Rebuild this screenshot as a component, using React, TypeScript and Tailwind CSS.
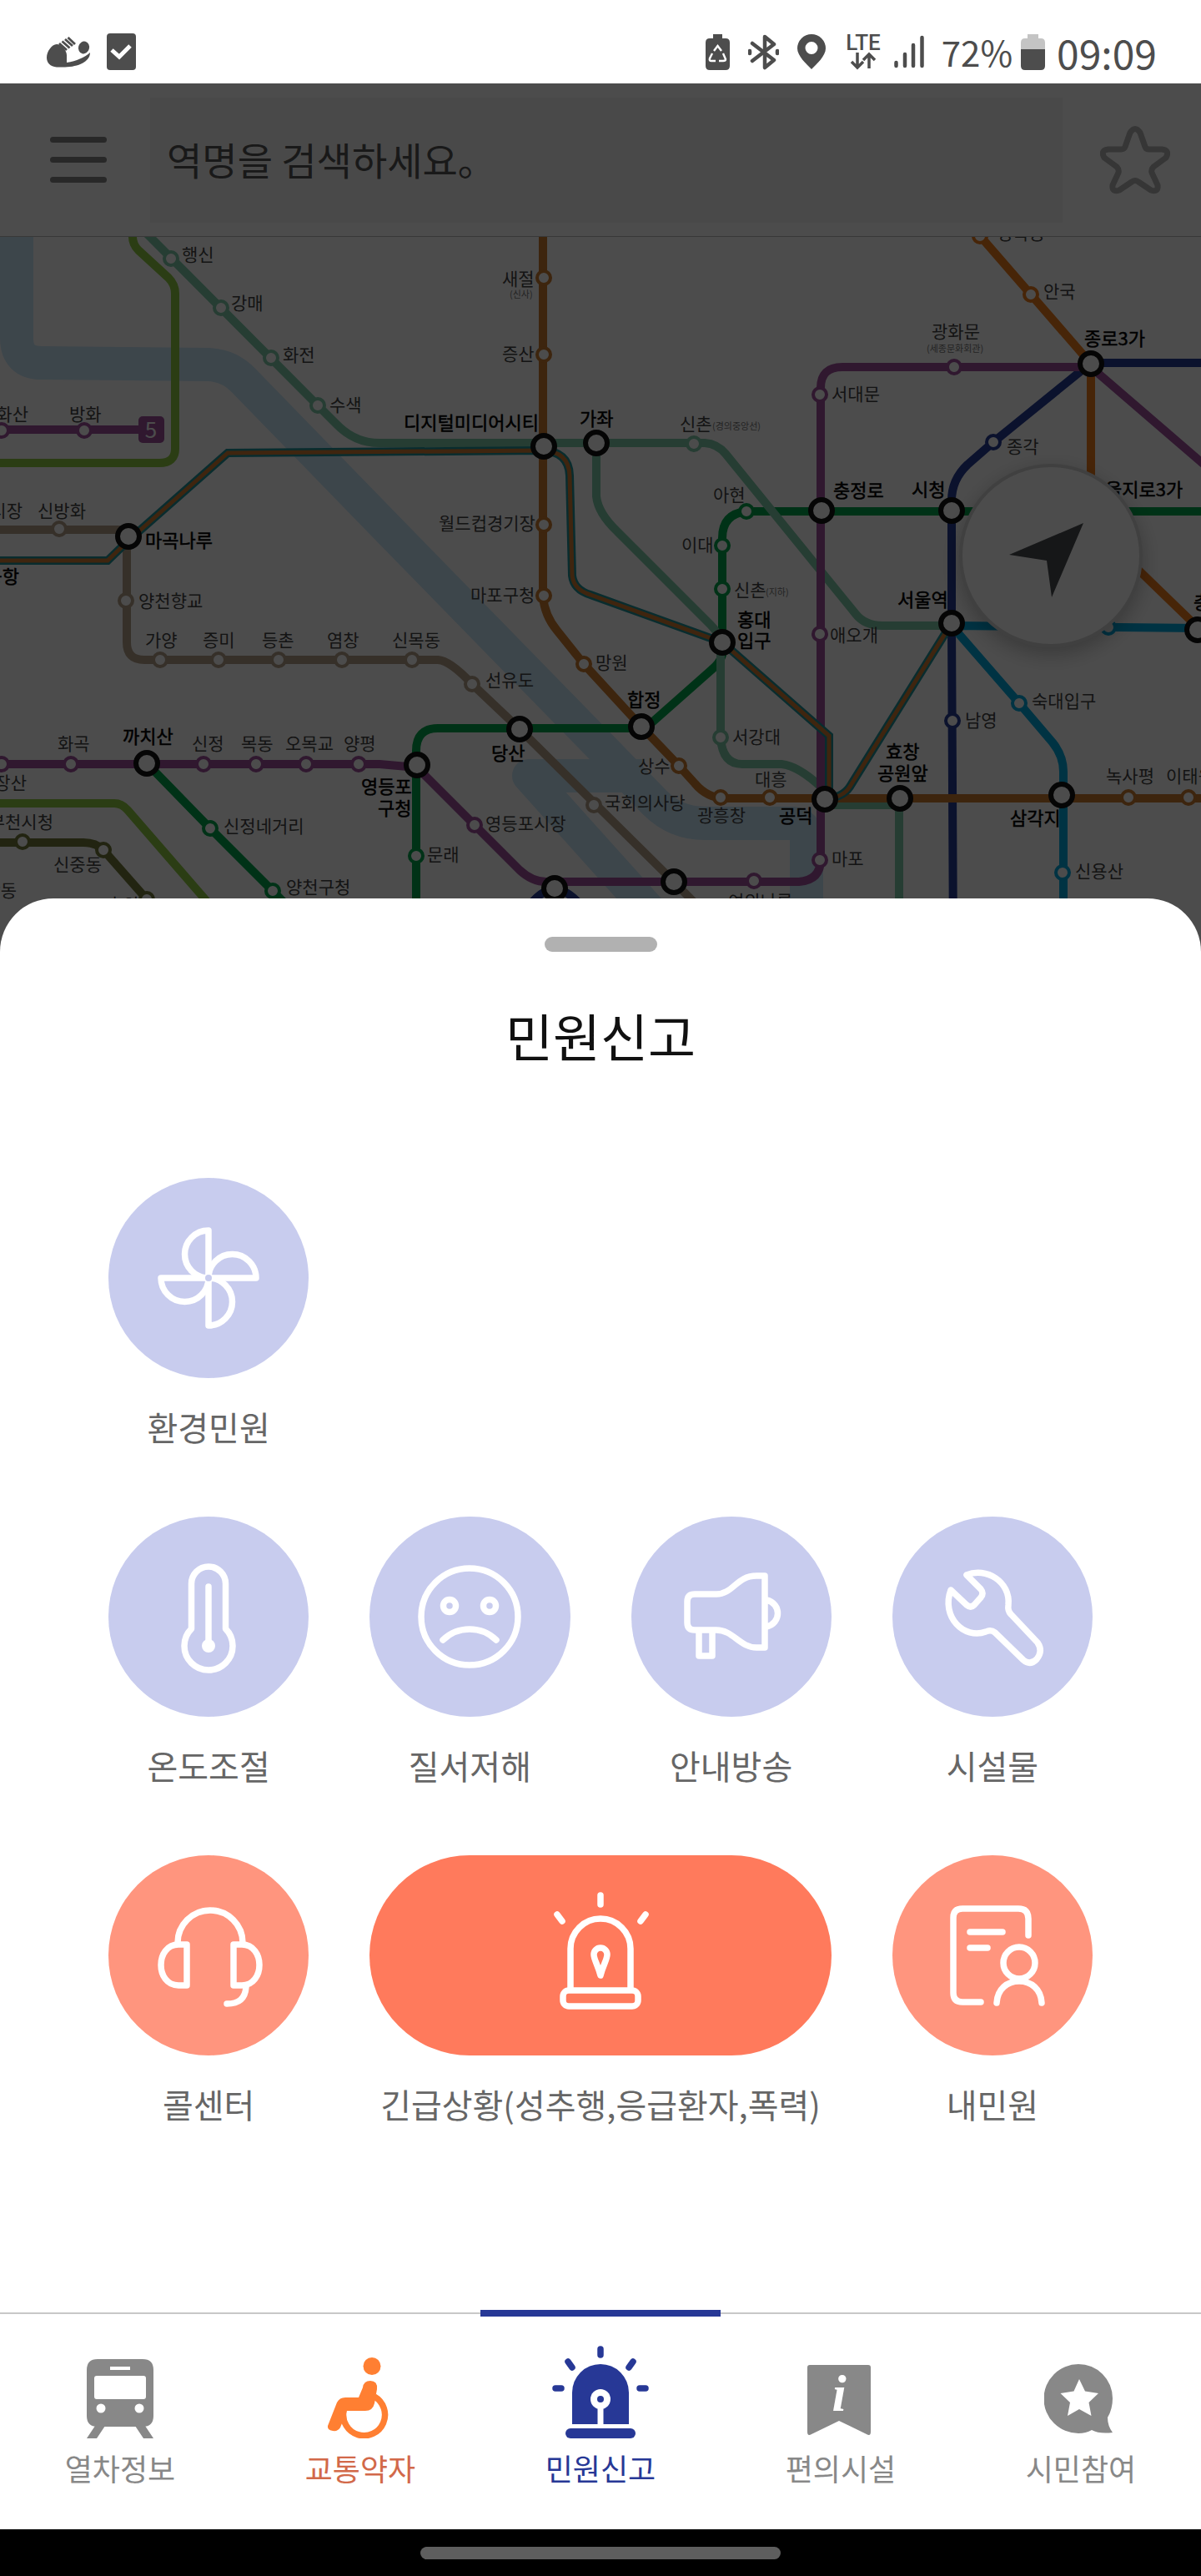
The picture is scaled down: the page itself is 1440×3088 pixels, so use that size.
import { useState, type ReactNode } from 'react';

const sans = "font-['Noto_Sans_CJK_KR','Noto_Sans',sans-serif]";

const COLORS = {
  line1: '#263c96',
  line2: '#00a84d',
  line3: '#ef7c1c',
  line4: '#00aae0',
  line5: '#a0519f',
  line6: '#cd7c2f',
  line7: '#747b3a',
  line9: '#b5a18b',
  gyeongui: '#7fcbab',
  seohae: '#8fcb43',
  airport: '#1f959b',
};

const LINES: { d: string; color: string }[] = [
  { color: COLORS.seohae, d: 'M159 276V284Q159 293 166 300L202 333Q210 341 210 352V538Q210 555 191 555H0' },
  { color: COLORS.seohae, d: 'M0 963H137Q146 963 153 971L245 1077L290 1130' },
  { color: COLORS.line7, d: 'M0 1010H100Q115 1010 124 1019L176 1078L190 1095' },
  { color: COLORS.line2, d: 'M1440 613H895Q866 616 866 645V785Q863 795 853 803L775 872L769 873H525Q499 873 499 900V1140' },
  { color: COLORS.line2, d: 'M176 915L252 993L327 1068L390 1132' },
  { color: COLORS.gyeongui, d: 'M172 276L381 486L403 508Q425 531 455 531H845Q860 532 870 544L1026 736Q1037 750 1058 750H1141' },
  { color: COLORS.gyeongui, d: 'M715 531V595Q717 615 740 637L852 749Q864 761 864 775V884Q866 916 890 916H937Q957 918 985 944L989 965H1078V1140' },
  { color: COLORS.line9, d: 'M0 635H152V770Q152 791 173 791H525Q540 792 566 820L623 874L808 1057L870 1120' },
  { color: COLORS.line1, d: 'M1440 435H1308L1191 530L1160 557Q1141 575 1141 600V747L1143 1140' },
  { color: COLORS.line1, d: 'M630 1092Q648 1066 665 1066Q682 1066 702 1092' },
  { color: COLORS.line5, d: 'M0 515H170' },
  { color: COLORS.line5, d: 'M0 916H455L500 920L623 1043Q638 1057 655 1057H958Q984 1055 984 1030V465Q984 440 1010 440H1308L1460 571' },
  { color: COLORS.line6, d: 'M651 276V715Q653 738 668 756L700 796L769 871L814 918L833 939Q848 957 870 957H1440' },
  { color: COLORS.line3, d: 'M1170 277L1236 353L1308 436V628L1436 752' },
  { color: COLORS.line4, d: 'M1440 753L1141 750L1222 843L1262 890Q1275 906 1275 925V1140' },
];

const AIRPORT = [
  'M0 672H129L154 648L273 543L650 540Q682 541 683 570L686 690Q688 707 708 713L866 770L994 882V957',
  'M989 957Q1010 957 1019 943L1141 747',
];

const STOPS: { color: string; at: [number, number][] }[] = [
  { color: COLORS.gyeongui, at: [[205, 310], [265, 369], [325, 429], [381, 486], [832, 532], [864, 884]] },
  { color: COLORS.line5, at: [[2, 516], [101, 516], [2, 916], [85, 916], [244, 916], [307, 916], [367, 916], [430, 916], [569, 989], [904, 1056], [983, 1031], [983, 760], [983, 473], [1144, 440]] },
  { color: COLORS.line6, at: [[652, 333], [652, 425], [652, 629], [652, 714], [700, 796], [814, 918], [864, 956], [923, 956], [1353, 956], [1425, 956]] },
  { color: COLORS.line9, at: [[71, 634], [151, 720], [192, 791], [262, 791], [334, 791], [410, 791], [494, 791], [566, 820], [712, 965]] },
  { color: COLORS.line2, at: [[895, 613], [866, 654], [866, 706], [499, 1026], [252, 993], [327, 1068]] },
  { color: COLORS.line1, at: [[1191, 530], [1142, 864]] },
  { color: COLORS.line3, at: [[1175, 283], [1236, 353]] },
  { color: COLORS.line4, at: [[1329, 752], [1222, 843], [1274, 1046]] },
  { color: COLORS.line7, at: [[27, 1009], [124, 1019], [176, 1078]] },
];

const TRANSFERS: [number, number][] = [
  [154, 643], [652, 535], [715, 531], [1308, 436], [985, 612], [1141, 612], [1308, 613], [1141, 747],
  [1436, 755], [866, 770], [769, 871], [623, 874], [176, 915], [500, 917], [989, 958], [1079, 957],
  [1273, 953], [665, 1065], [808, 1057],
];

// x, baseline, name
const STOP_NAMES: [number, number, string][] = [
  [218, 313, '행신'], [277, 371, '강매'], [339, 433, '화전'], [395, 493, '수색'],
  [83, 504, '방화'], [45, 620, '신방화'], [602, 342, '새절'], [602, 432, '증산'],
  [815, 516, '신촌'], [855, 601, '아현'], [817, 661, '이대'], [526, 635, '월드컵경기장'],
  [1195, 287, '경복궁'], [1251, 357, '안국'], [1117, 405, '광화문'], [997, 480, '서대문'],
  [1207, 543, '종각'], [166, 728, '양천향교'], [174, 775, '가양'], [243, 775, '증미'],
  [314, 775, '등촌'], [392, 775, '염창'], [470, 775, '신목동'], [69, 899, '화곡'],
  [230, 899, '신정'], [289, 899, '목동'], [342, 899, '오목교'], [412, 899, '양평'],
  [268, 998, '신정네거리'], [64, 1044, '신중동'], [128, 1092, '춘의'], [343, 1071, '양천구청'],
  [564, 721, '마포구청'], [880, 715, '신촌'], [714, 802, '망원'], [582, 823, '선유도'],
  [765, 926, '상수'], [725, 970, '국회의사당'], [582, 995, '영등포시장'], [512, 1032, '문래'],
  [878, 891, '서강대'], [905, 942, '대흥'], [836, 985, '광흥창'], [873, 1088, '여의나루'],
  [995, 769, '애오개'], [1237, 848, '숙대입구'], [1157, 871, '남영'], [1326, 938, '녹사평'],
  [1398, 938, '이태원'], [1289, 1052, '신용산'], [997, 1037, '마포'],
];

// names cut off by the left edge are anchored at their end
const EDGE_NAMES: [number, number, string][] = [
  [34, 504, '개화산'], [27, 620, '공항시장'], [32, 946, '우장산'], [64, 993, '부천시청'], [20, 1075, '상동'],
];

const TRANSFER_NAMES: [number, number, string][] = [
  [174, 656, '마곡나루'], [484, 515, '디지털미디어시티'], [695, 510, '가좌'], [1300, 414, '종로3가'],
  [999, 596, '충정로'], [1093, 595, '시청'], [1325, 595, '을지로3가'], [147, 891, '까치산'],
  [433, 951, '영등포'], [453, 977, '구청'], [884, 751, '홍대'], [884, 776, '입구'],
  [752, 847, '합정'], [589, 911, '당산'], [934, 986, '공덕'], [1076, 727, '서울역'],
  [1062, 909, '효창'], [1052, 935, '공원앞'], [1211, 989, '삼각지'], [1431, 730, '충무로'],
];

const NOTES: [number, number, string][] = [
  [611, 357, '(신사)'], [854, 515, '(경의중앙선)'], [1111, 422, '(세종문화회관)'], [918, 714, '(지하)'],
];

function SubwayMap() {
  return (
    <svg viewBox="0 284 1440 857" className="block w-full bg-white" role="img" aria-label="노선도">
      <g fill="none" stroke="#cde9fb" strokeWidth="40" strokeLinejoin="round">
        <path d="M20 276V405Q20 435 50 435L250 437Q275 438 292 456L470 639L723 898L785 962Q810 987 845 987H950Q967 988 967 1005V1141" />
        <path d="M770 930H634L810 1126" />
      </g>
      <g fill="none" strokeWidth="10" strokeLinejoin="round">
        {LINES.map((l) => (
          <path key={l.d} d={l.d} stroke={l.color} />
        ))}
      </g>
      <g fill="none">
        {AIRPORT.map((d) => (
          <g key={d}>
            <path d={d} stroke={COLORS.airport} strokeWidth="10" />
            <path d={d} stroke="#d27d32" strokeWidth="5" />
          </g>
        ))}
      </g>
      {STOPS.map((s) => (
        <g key={s.color} fill="#fff" stroke={s.color} strokeWidth="4">
          {s.at.map(([x, y]) => (
            <circle key={`${x}-${y}`} cx={x} cy={y} r="8" />
          ))}
        </g>
      ))}
      <g fill="#fff" stroke="#111" strokeWidth="6">
        {TRANSFERS.map(([x, y]) => (
          <circle key={`${x}-${y}`} cx={x} cy={y} r="13" />
        ))}
      </g>
      <rect x="166" y="499" width="31" height="32" rx="5" fill={COLORS.line5} />
      <text x="181" y="525" textAnchor="middle" fontSize="26" fill="#fff">5</text>
      <g fontSize="21" fill="#444">
        {STOP_NAMES.map(([x, y, name]) => (
          <text key={`${x}-${y}`} x={x} y={y}>{name}</text>
        ))}
        {EDGE_NAMES.map(([x, y, name]) => (
          <text key={name} x={x} y={y} textAnchor="end">{name}</text>
        ))}
      </g>
      <g fontSize="22" fill="#000" stroke="#000" strokeWidth="0.500">
        {TRANSFER_NAMES.map(([x, y, name]) => (
          <text key={name} x={x} y={y}>{name}</text>
        ))}
        <text x="23" y="699" textAnchor="end">김포공항</text>
      </g>
      <g fontSize="11" fill="#777">
        {NOTES.map(([x, y, note]) => (
          <text key={note} x={x} y={y}>{note}</text>
        ))}
      </g>
    </svg>
  );
}

function StatusBar() {
  return (
    <div className="flex h-[100px] items-center justify-between bg-white pt-6 pr-[53px] pl-14 text-[#4d4d4d]">
      <div className="flex items-center gap-[19px]">
        <svg width="53" height="37" viewBox="0 0 53 37" fill="currentColor">
          <path d="M12 9C17 9 24 16 24 22V31C36 29 45 25 52 19C52 30 38 36 22 36.500H12C4 36 0 31 0 25C0 18 6 9 12 9Z" />
          <path d="M15 8L24 16M18.500 5.500L27.500 13.500M22 3L31 11M25.500 1L34 9" stroke="currentColor" strokeWidth="2.800" />
          <ellipse cx="44.500" cy="13" rx="6.500" ry="7.500" transform="rotate(15 44.5 13)" />
        </svg>
        <svg width="35" height="44" viewBox="0 0 35 44">
          <rect width="35" height="44" rx="4" fill="currentColor" />
          <path d="M6 20L15 28L28 15" fill="none" stroke="#fff" strokeWidth="5" />
        </svg>
      </div>
      <div className="flex items-center">
        <svg className="mr-[22px]" width="29" height="43" viewBox="0 0 29 43">
          <path d="M9 0H20V5H24Q29 5 29 10V38Q29 43 24 43H5Q0 43 0 38V10Q0 5 5 5H9Z" fill="currentColor" />
          <path d="M10 20L14.500 14L19 20M21 23L24 30Q24 32 21 32H16M12 32H7Q4 32 5 29L8 23" fill="none" stroke="#fff" strokeWidth="2.400" />
        </svg>
        <svg className="mr-[22px]" width="37" height="43" viewBox="0 0 37 43" fill="none" stroke="currentColor" strokeWidth="4.500" strokeLinejoin="round" strokeLinecap="round">
          <path d="M5 11L31 31L20 40V3L31 12L5 32" />
          <path d="M2 20V23M35 20V23" />
        </svg>
        <svg className="mr-6" width="34" height="42" viewBox="0 0 34 42">
          <path fillRule="evenodd" d="M17 0A17 17 0 0 1 34 17C34 26 23 36 17 42C11 36 0 26 0 17A17 17 0 0 1 17 0ZM17 9A7.500 7.500 0 1 0 17 24A7.500 7.500 0 1 0 17 9Z" fill="currentColor" />
        </svg>
        <div className="mr-4 flex flex-col items-center">
          <span className="font-['Roboto',sans-serif] text-[26px] leading-[22px] font-medium">LTE</span>
          <svg width="32" height="22" viewBox="0 0 32 22" fill="none" stroke="currentColor" strokeWidth="3.500">
            <path d="M9 1V19M2 12L9 19L16 12M23 20V3M16 10L23 3L30 10" />
          </svg>
        </div>
        <svg className="mr-[21px]" width="36" height="40" viewBox="0 0 36 40" stroke="currentColor" strokeWidth="4.500" strokeLinecap="round">
          <path d="M2.500 33V37M13 23V37M23 12V37M33.500 3V37" />
        </svg>
        <span className="text-[42px] leading-[44px]">72%</span>
        <svg className="mr-3.5 ml-2.5" width="29" height="43" viewBox="0 0 29 43">
          <path d="M8 0H21V5H24Q29 5 29 10V18H0V10Q0 5 5 5H8Z" fill="#c4c4c4" />
          <path d="M0 18H29V38Q29 43 24 43H5Q0 43 0 38Z" fill="currentColor" />
        </svg>
        <span className="text-[48px] leading-[44px]">09:09</span>
      </div>
    </div>
  );
}

function SearchHeader() {
  const [query, setQuery] = useState('');
  return (
    <header className="flex h-[184px] items-center border-b border-[#bbb] bg-white">
      <button type="button" aria-label="메뉴" className="flex w-[180px] shrink-0 flex-col gap-[17px] pl-[60px]">
        <span className="h-[7px] w-[68px] rounded-full bg-[#858585]" />
        <span className="h-[7px] w-[68px] rounded-full bg-[#858585]" />
        <span className="h-[7px] w-[68px] rounded-full bg-[#858585]" />
      </button>
      <input
        type="text"
        aria-label="역명 검색"
        placeholder="역명을 검색하세요。"
        value={query}
        onChange={(e) => setQuery(e.target.value)}
        className="h-[150px] min-w-0 flex-1 bg-[#f6f6f6] px-5 pb-1 text-[46px] text-[#555] placeholder:text-[#555] focus:outline-none"
      />
      <button type="button" aria-label="즐겨찾기" className="flex w-[166px] shrink-0 justify-center pl-2">
        <svg width="84" height="82" viewBox="0 0 84 82" fill="none" stroke="#b4b4b4" strokeWidth="7" strokeLinejoin="round">
          <path d="M36 8Q42 -1 48 8L54 25Q55 28 59 28H74Q84 29 79 38L64 49Q61 52 62 56L69 71Q70 80 61 77L46 67Q42 64 38 67L23 77Q14 80 15 71L22 56Q23 52 20 49L5 38Q0 29 10 28H25Q29 28 30 25Z" />
        </svg>
      </button>
    </header>
  );
}

interface ReportItem {
  label: string;
  tone: string;
  place?: string;
  icon: ReactNode;
}

const ITEMS: ReportItem[] = [
  {
    label: '환경민원',
    tone: 'bg-[#c8ccee]',
    icon: (
      <>
        {[0, 90, 180, 270].map((a) => (
          <path key={a} transform={`rotate(${a})`} d="M0 0V-57A28.500 28.500 0 0 0 0 0" />
        ))}
        <circle r="4" fill="#c8ccee" stroke="none" />
      </>
    ),
  },
  {
    label: '온도조절',
    tone: 'bg-[#c8ccee]',
    place: 'col-start-1',
    icon: (
      <>
        <path d="M-20.500 14.500V-39.500A20.500 20.500 0 0 1 20.500 -39.500V14.500A29 29 0 1 1 -20.500 14.500Z" />
        <path d="M0 -36V32" />
        <circle cy="35" r="8" fill="#fff" stroke="none" />
      </>
    ),
  },
  {
    label: '질서저해',
    tone: 'bg-[#c8ccee]',
    icon: (
      <>
        <circle r="58" />
        <circle cx="-24" cy="-13" r="7.500" />
        <circle cx="24" cy="-13" r="7.500" />
        <path d="M-32 28A46 46 0 0 1 32 28" />
      </>
    ),
  },
  {
    label: '안내방송',
    tone: 'bg-[#c8ccee]',
    icon: (
      <>
        <path d="M-44 -27H-18C2 -27 6 -49 30 -49H40V37H30C10 37 2 16 -18 16H-44Q-53 16 -53 7V-18Q-53 -27 -44 -27Z" />
        <path d="M42 -20C60 -16 60 8 42 12M-39 18V47H-23V18" />
      </>
    ),
  },
  {
    label: '시설물',
    tone: 'bg-[#c8ccee]',
    icon: (
      <path d="M-50 -32L-31 -14Q-26 -10 -22 -14L-14 -23Q-10 -28 -14 -33L-31 -50C-8 -60 22 -42 19 -14Q18 -7 22 -3L54 31Q61 41 53 51Q45 59 37 52L3 19Q-2 15 -8 18C-34 28 -62 0 -50 -32Z" />
    ),
  },
  {
    label: '콜센터',
    tone: 'bg-[#ff957e]',
    icon: (
      <>
        <path d="M-37 -15A39 39 0 0 1 41 -15" />
        <path d="M-26 -13H-36C-64 -13 -64 36 -36 36H-26ZM30 -13H40C68 -13 68 36 40 36H30Z" />
        <path d="M45 38C44 52 36 58 22 58" />
      </>
    ),
  },
  {
    label: '긴급상황(성추행,응급환자,폭력)',
    tone: 'bg-[#ff7a5c]',
    place: 'col-span-2',
    icon: (
      <>
        <path d="M0 -72V-61M-52 -49L-46 -41M54 -49L48 -41" />
        <path d="M-36 40V-8A36 36 0 0 1 36 -8V40" />
        <rect x="-45" y="42" width="90" height="19" rx="7" />
        <path d="M0 24C-3 12 -8 5 -8 -1A8 8 0 0 1 8 -1C8 5 3 12 0 24Z" />
      </>
    ),
  },
  {
    label: '내민원',
    tone: 'bg-[#ff957e]',
    icon: (
      <>
        <path d="M43 -24V-44Q43 -56 31 -56H-36Q-47 -56 -47 -45V45Q-47 56 -36 56H-14" />
        <path d="M-27 -28H12M-27 -9H-6" />
        <circle cx="32" cy="9" r="19" />
        <path d="M5 57C6 40 18 31 32 31C46 31 58 40 59 57" />
      </>
    ),
  },
];

function ReportButton({ item }: { item: ReportItem }) {
  return (
    <button type="button" className={`flex flex-col items-center gap-7 ${item.place ?? ''}`}>
      <span className={`flex h-60 w-full items-center justify-center rounded-full ${item.tone}`}>
        <svg
          width="160"
          height="160"
          viewBox="-80 -80 160 160"
          fill="none"
          stroke="#fff"
          strokeWidth="7.500"
          strokeLinecap="round"
          strokeLinejoin="round"
        >
          {item.icon}
        </svg>
      </span>
      <span className="text-[40px] leading-[60px] whitespace-nowrap text-[#666]">{item.label}</span>
    </button>
  );
}

const TABS: { label: string; text: string; icon: ReactNode }[] = [
  {
    label: '열차정보',
    text: 'text-[#888]',
    icon: (
      <svg width="80" height="95" viewBox="0 0 80 95" fill="#888">
        <path fillRule="evenodd" d="M13 0H67Q80 0 80 13V68Q80 81 67 81H13Q0 81 0 68V13Q0 0 13 0ZM28 9V13H52V9ZM12 20Q9 20 9 23V45Q9 48 12 48H68Q71 48 71 45V23Q71 20 68 20Z" />
        <path d="M10 80L0 95H12L22 80ZM70 80L80 95H68L58 80Z" />
        <circle cx="17" cy="59" r="5.500" fill="#fff" />
        <circle cx="63" cy="59" r="5.500" fill="#fff" />
      </svg>
    ),
  },
  {
    label: '교통약자',
    text: 'text-[#d2694a]',
    icon: (
      <svg width="80" height="97" viewBox="0 0 80 97" fill="#ff7f32">
        <circle cx="54" cy="10.500" r="10.500" />
        <path d="M43 36Q44 28 52 28Q61 28 60 38L57 55Q55 64 46 64H24L16 84Q13 89 7 88Q0 87 1 82L12 54Q15 48 22 48H38Z" />
        <path d="M57 47A25 25 0 1 1 20 64" fill="none" stroke="#ff7f32" strokeWidth="7.500" />
      </svg>
    ),
  },
  {
    label: '민원신고',
    text: 'text-[#273896]',
    icon: (
      <svg width="116" height="111" viewBox="0 0 116 111" fill="#273896">
        <path d="M24 94V56A34 34 0 0 1 92 56V94Z" />
        <rect x="16" y="99" width="84" height="12" rx="6" />
        <path d="M58 4V11M19 19L24 26M97 19L92 26M4 51H11M105 51H112" stroke="#273896" strokeWidth="7.500" strokeLinecap="round" />
        <circle cx="58" cy="64" r="12" fill="#fff" />
        <path d="M54.500 70H61.500V94H54.500Z" fill="#fff" />
        <circle cx="58" cy="64" r="4" />
      </svg>
    ),
  },
  {
    label: '편의시설',
    text: 'text-[#888]',
    icon: (
      <svg width="80" height="88" viewBox="0 0 80 88">
        <path d="M3 0H73Q76 0 76 3V80Q76 86 71 83L38 67L5 83Q0 86 0 80V3Q0 0 3 0Z" fill="#888" />
        <text x="38" y="55" textAnchor="middle" fontFamily="'Liberation Serif', serif" fontSize="62" fontWeight="700" fontStyle="italic" fill="#fff">i</text>
      </svg>
    ),
  },
  {
    label: '시민참여',
    text: 'text-[#888]',
    icon: (
      <svg width="88" height="89" viewBox="0 0 88 89">
        <path d="M41 0A41 41 0 0 1 82 41Q82 54 76 64Q76 74 82 82Q66 84 57 79Q50 83 41 83A41 41 0 0 1 41 0Z" fill="#888" />
        <path d="M42 18L49 32.500L65 35L53.500 46L56.500 62L42 54L28 62L31 46L19.500 35L35.500 32.500Z" fill="#fff" />
      </svg>
    ),
  },
];

export default function App() {
  const [active, setActive] = useState('민원신고');

  return (
    <div className={`flex min-h-screen flex-col bg-white ${sans}`}>
      <StatusBar />

      <div className="relative">
        <SearchHeader />
        <div className="relative">
          <SubwayMap />
          <button
            type="button"
            aria-label="내 위치"
            className="absolute top-[272px] right-[70px] flex size-[220px] items-center justify-center rounded-full border-4 border-[#d8d8d8] bg-white shadow-[0_8px_24px_rgba(0,0,0,0.25)]"
          >
            <svg width="110" height="110" viewBox="-55 -55 110 110">
              <path d="M39 -39L-50 -1L-5 6L1 50Z" fill="#4b4e52" />
            </svg>
          </button>
        </div>
        <div className="absolute inset-0 bg-black/70" />
      </div>

      <main className="relative -mt-16 flex-1 rounded-t-[64px] bg-white pt-[46px] pb-[110px]">
        <div className="mx-auto h-[18px] w-[135px] rounded-full bg-[#b1b1b1]" />
        <h1 className="mt-[54px] text-center text-[62px] leading-[92px] text-[#111]">민원신고</h1>
        <div className="mt-[125px] grid grid-cols-4 gap-x-[73px] gap-y-[78px] px-[130px]">
          {ITEMS.map((item) => (
            <ReportButton key={item.label} item={item} />
          ))}
        </div>
      </main>

      <nav className="grid h-[260px] grid-cols-5 border-t-2 border-[#c8c8c8] bg-white">
        {TABS.map((t) => (
          <button
            key={t.label}
            type="button"
            onClick={() => setActive(t.label)}
            className={`relative flex flex-col items-center gap-[13px] pt-[38px] ${t.text}`}
          >
            {active === t.label && <span className="absolute inset-x-0 -top-[5px] h-2 bg-[#273896]" />}
            <span className="flex h-[111px] items-end">{t.icon}</span>
            <span className="text-[36px] leading-[44px]">{t.label}</span>
          </button>
        ))}
      </nav>

      <div className="flex h-14 items-center justify-center bg-black">
        <div className="h-[15px] w-[432px] rounded-full bg-[#5e5e5e]" />
      </div>
    </div>
  );
}
